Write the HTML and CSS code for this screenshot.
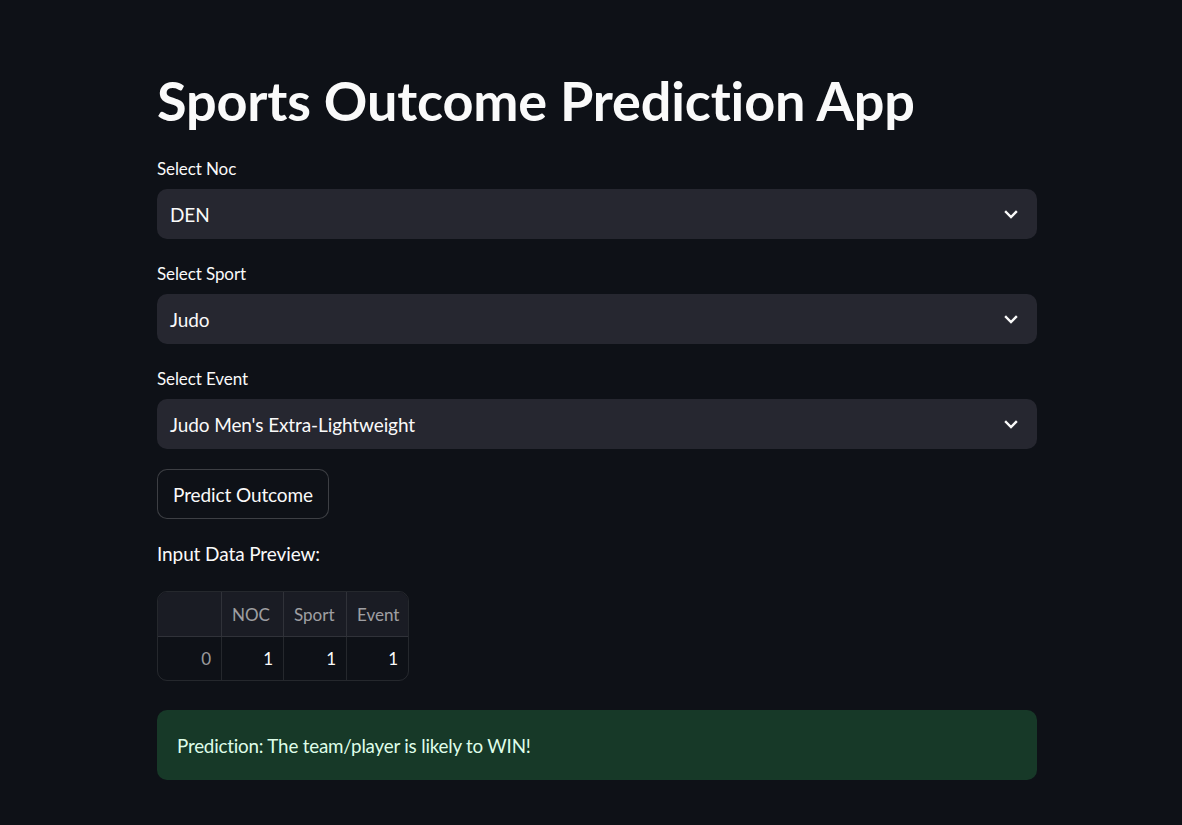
FILE: index.html
```html
<!DOCTYPE html>
<html>
<head>
<meta charset="utf-8">
<link rel="stylesheet" href="styles.css">
</head>
<body>
<main class="app">
  <h1 class="title">Sports Outcome Prediction App</h1>

  <div class="field">
    <label class="label">Select Noc</label>
    <div class="select"><span>DEN</span>
      <svg class="chev" width="14" height="9" viewBox="0 0 14 9"><path d="M2 2 L7 7 L12 2" fill="none" stroke="#fafafa" stroke-width="2.4" stroke-linecap="square"/></svg>
    </div>
  </div>

  <div class="field">
    <label class="label">Select Sport</label>
    <div class="select"><span>Judo</span>
      <svg class="chev" width="14" height="9" viewBox="0 0 14 9"><path d="M2 2 L7 7 L12 2" fill="none" stroke="#fafafa" stroke-width="2.4" stroke-linecap="square"/></svg>
    </div>
  </div>

  <div class="field">
    <label class="label">Select Event</label>
    <div class="select"><span>Judo Men's Extra-Lightweight</span>
      <svg class="chev" width="14" height="9" viewBox="0 0 14 9"><path d="M2 2 L7 7 L12 2" fill="none" stroke="#fafafa" stroke-width="2.4" stroke-linecap="square"/></svg>
    </div>
  </div>

  <button class="btn">Predict Outcome</button>

  <p class="subtext">Input Data Preview:</p>

  <div class="table">
    <div class="cell head idx"></div>
    <div class="cell head">NOC</div>
    <div class="cell head">Sport</div>
    <div class="cell head last">Event</div>
    <div class="cell body idx">0</div>
    <div class="cell body">1</div>
    <div class="cell body">1</div>
    <div class="cell body last">1</div>
  </div>

  <div class="success">Prediction: The team/player is likely to WIN!</div>
</main>
</body>
</html>
```
FILE: styles.css
```css
html, body {
  margin: 0;
  padding: 0;
  background: #0e1117;
}
body {
  font-family: "Lato", "Liberation Sans", sans-serif;
  color: #fafafa;
}
.app {
  width: 880px;
  margin-left: 157px;
  padding-top: 68px;
  display: flex;
  flex-direction: column;
  align-items: flex-start;
}
.title {
  margin: 0;
  font-size: 54px;
  font-weight: 700;
  line-height: 66px;
  height: 66px;
  letter-spacing: -0.15px;
}
.field {
  width: 100%;
  display: flex;
  flex-direction: column;
}
.title + .field { margin-top: 23px; }
.field + .field { margin-top: 23px; }
.label {
  font-size: 17px;
  line-height: 22px;
  height: 22px;
  padding-top: 1px;
  margin-bottom: 9px;
  letter-spacing: -0.1px;
}
.select {
  height: 50px;
  border-radius: 10px;
  background: #262730;
  display: flex;
  align-items: center;
  justify-content: space-between;
  padding: 0 19px 0 13px;
  font-size: 19px;
  letter-spacing: -0.1px;
}
.chev { display: block; }
.btn {
  margin-top: 20px;
  height: 50px;
  padding: 0 15px;
  border: 1px solid rgba(250,250,250,0.2);
  border-radius: 10px;
  background: #0e1117;
  color: #fafafa;
  font-family: inherit;
  font-size: 19px;
  letter-spacing: -0.1px;
}
.subtext {
  margin: 23px 0 0;
  font-size: 19px;
  line-height: 24px;
  letter-spacing: -0.1px;
}
.table {
  margin-top: 25px;
  display: grid;
  grid-template-columns: 64px 62px 63px 61px;
  grid-template-rows: 45px 43px;
  border: 1px solid rgba(250,250,250,0.1);
  border-radius: 10px;
  overflow: hidden;
  font-size: 17px;
}
.cell {
  display: flex;
  align-items: center;
  justify-content: flex-end;
  padding: 0 10px;
  border-right: 1px solid rgba(250,250,250,0.1);
}
.cell.last { border-right: none; }
.head {
  background: #1a1c24;
  color: rgba(250,250,250,0.6);
  justify-content: flex-start;
  border-bottom: 1px solid rgba(250,250,250,0.1);
}
.body.idx { color: rgba(250,250,250,0.6); }
.success {
  margin-top: 29px;
  width: 100%;
  box-sizing: border-box;
  height: 70px;
  border-radius: 10px;
  background: #173928;
  color: #dffde9;
  font-size: 18.8px;
  letter-spacing: -0.2px;
  display: flex;
  align-items: center;
  padding: 0 20px;
}
```
